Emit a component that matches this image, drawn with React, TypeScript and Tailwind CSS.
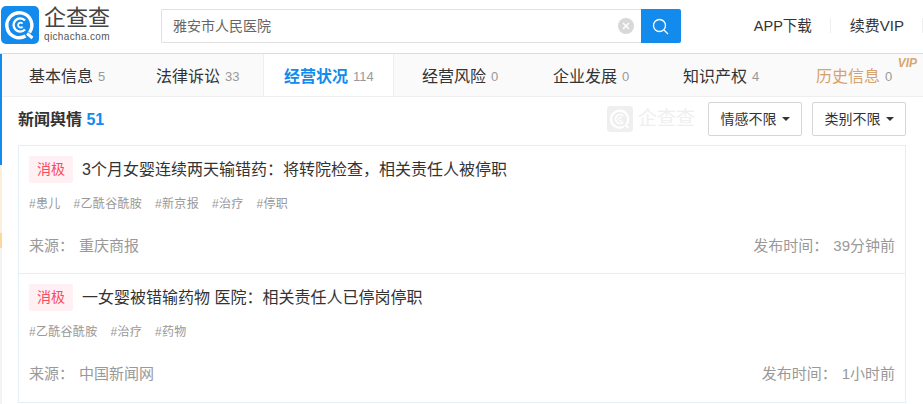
import React from 'react';

const FONT = "font-['Liberation_Sans','Noto_Sans_CJK_SC',sans-serif]";

const tabs = [
  { label: '基本信息', count: '5', box: 'w-[133px] pl-[27px]' },
  { label: '法律诉讼', count: '33', box: 'w-[128px] pl-[21px]' },
  { label: '经营状况', count: '114', box: 'w-[131px] pl-[20px]', active: true },
  { label: '经营风险', count: '0', box: 'w-[132px] pl-[28px]' },
  { label: '企业发展', count: '0', box: 'w-[130px] pl-[27px]' },
  { label: '知识产权', count: '4', box: 'w-[133px] pl-[27px]' },
  { label: '历史信息', count: '0', box: 'w-[134px] pl-[27px]', vip: true },
];

const news = [
  {
    title: '3个月女婴连续两天输错药：将转院检查，相关责任人被停职',
    tags: ['#患儿', '#乙酰谷酰胺', '#新京报', '#治疗', '#停职'],
    source: '重庆商报',
    time: '39分钟前',
    row: 'h-[127px]',
  },
  {
    title: '一女婴被错输药物 医院：相关责任人已停岗停职',
    tags: ['#乙酰谷酰胺', '#治疗', '#药物'],
    source: '中国新闻网',
    time: '1小时前',
    row: 'h-[129px] border-t border-[#e4eef6]',
  },
];

const LogoMark = ({ size, color, bg }: { size: number; color: string; bg: string }) => (
  <svg width={size} height={size} viewBox="0 0 38 38">
    <rect width="38" height="38" rx="5" fill={bg} />
    <path d="M28.5 26.5a12.5 12.5 0 1 0-4 3.6" fill="none" stroke={color} strokeWidth="3.4" />
    <path d="M24 14.5a6.6 6.6 0 1 0 0 9" fill="none" stroke={color} strokeWidth="2.4" />
    <path d="M21.6 17.6a2.5 2.5 0 1 0 0 3" fill="none" stroke={color} strokeWidth="1.8" />
    <path d="M26 27.5l5.5 4.5" stroke={color} strokeWidth="3" />
  </svg>
);

const FilterButton = ({ label }: { label: string }) => (
  <button className="h-[34px] w-[94px] flex items-center justify-center gap-[5px] border border-[#d6d6d6] rounded-[2px] bg-white text-[14px] text-[#333]">
    {label}
    <span className="w-0 h-0 border-x-[4px] border-x-transparent border-t-[4px] border-t-[#333]" />
  </button>
);

export default function App() {
  return (
    <div className={`${FONT} w-[923px] h-[404px] overflow-hidden bg-white`}>
      <header className="h-[54px] border-b border-[#ddd] flex items-start">
        <div className="w-[161px] pt-[6px] pl-px flex items-start gap-[5px]">
          <LogoMark size={38} color="#fff" bg="#128bed" />
          <div className="flex flex-col">
            <span className="text-[22px] leading-[24px] text-[#444]">企查查</span>
            <span className="text-[10px] leading-[12px] tracking-[0.35px] text-[#555] mt-px">qichacha.com</span>
          </div>
        </div>
        <div className="mt-[9px] w-[480px] h-[34px] border border-[#e0e0e0] border-r-0 flex items-center pl-[11px] pr-[7px] rounded-l-[2px]">
          <span className="flex-1 text-[14px] text-[#666]">雅安市人民医院</span>
          <span className="w-4 h-4 rounded-full bg-[#d8d8d8] flex items-center justify-center">
            <svg width="8" height="8" viewBox="0 0 8 8">
              <path d="M1 1l6 6M7 1l-6 6" stroke="#fff" strokeWidth="1.4" />
            </svg>
          </span>
        </div>
        <button className="mt-[9px] w-[40px] h-[34px] bg-[#128bed] rounded-r-[2px] flex items-center justify-center">
          <svg width="17" height="17" viewBox="0 0 17 17" fill="none" stroke="#fff" strokeWidth="1.3">
            <circle cx="7.5" cy="7.5" r="6" />
            <path d="M12 12l4 4" />
          </svg>
        </button>
        <div className="mt-[17px] ml-[73px] text-[14.5px] leading-[18px] text-[#333]">APP下载</div>
        <div className="mt-[18px] ml-[18px] w-px h-[15px] bg-[#eee]" />
        <div className="mt-[17px] ml-[19px] text-[15px] leading-[18px] text-[#333]">续费VIP</div>
        <div className="mt-[18px] ml-[18px] w-px h-[15px] bg-[#eee]" />
      </header>

      <div className="flex h-[350px]">
        <div className="w-[2px] shrink-0 flex flex-col">
          <div className="h-[111px] bg-[#128bed]" />
          <div className="h-[68px] bg-[#fdeedd]" />
          <div className="h-[15px] bg-[#fdd79c]" />
          <div className="flex-1 bg-[#f3f3f3]" />
        </div>
        <main className="flex-1 min-w-0">
          <nav className="h-[43px] flex bg-[#fafafa] border-b border-[#eee]">
            {tabs.map((t) => (
              <div
                key={t.label}
                className={`${t.box} relative pt-[3px] flex items-center gap-[5px] ${
                  t.active ? 'bg-white border-x border-[#eee] font-bold text-[#128bed]' : t.vip ? 'text-[#d6a26e]' : 'text-[#333]'
                } text-[16px]`}
              >
                {t.label}
                <span className="text-[13px] font-normal text-[#999]">{t.count}</span>
                {t.vip && (
                  <span className="absolute right-[6px] top-[3px] text-[12px] font-bold italic leading-[12px] text-[#d8a670]">VIP</span>
                )}
              </div>
            ))}
          </nav>

          <div className="h-[48px] flex items-start pl-[16px] pr-[17px] pt-[5px]">
            <h3 className="text-[16px] leading-[36px] font-bold text-[#333]">
              新闻舆情 <span className="text-[#128bed]">51</span>
            </h3>
            <div className="ml-auto flex items-center">
              <div className="flex items-center gap-[5px] mr-[13px] opacity-50">
                <LogoMark size={26} color="#fff" bg="#e0e0e0" />
                <span className="text-[19px] text-[#e0e0e0]">企查查</span>
              </div>
              <FilterButton label="情感不限" />
              <div className="ml-[10px]">
                <FilterButton label="类别不限" />
              </div>
            </div>
          </div>

          <div className="ml-[16px] w-[888px] border border-[#e4eef6]">
            {news.map((n) => (
              <div key={n.title} className={`${n.row} pl-[10px] pr-[10px] pt-[10px]`}>
                <div className="flex items-center h-[27px]">
                  <span className="w-[44px] h-[27px] flex items-center justify-center rounded-[2px] bg-[#fff0f3] text-[14px] text-[#fd485e]">消极</span>
                  <span className="ml-[9px] text-[16px] text-[#333]">{n.title}</span>
                </div>
                <div className="mt-[13px] flex gap-[13px] text-[12px] tracking-[0.3px] leading-[16px] text-[#999]">
                  {n.tags.map((t) => (
                    <span key={t}>{t}</span>
                  ))}
                </div>
                <div className="mt-[24px] flex justify-between text-[15px] leading-[20px] text-[#999]">
                  <span>来源：<span className="ml-[5px]">{n.source}</span></span>
                  <span>发布时间：<span className="ml-[5px]">{n.time}</span></span>
                </div>
              </div>
            ))}
          </div>
        </main>
      </div>
    </div>
  );
}
